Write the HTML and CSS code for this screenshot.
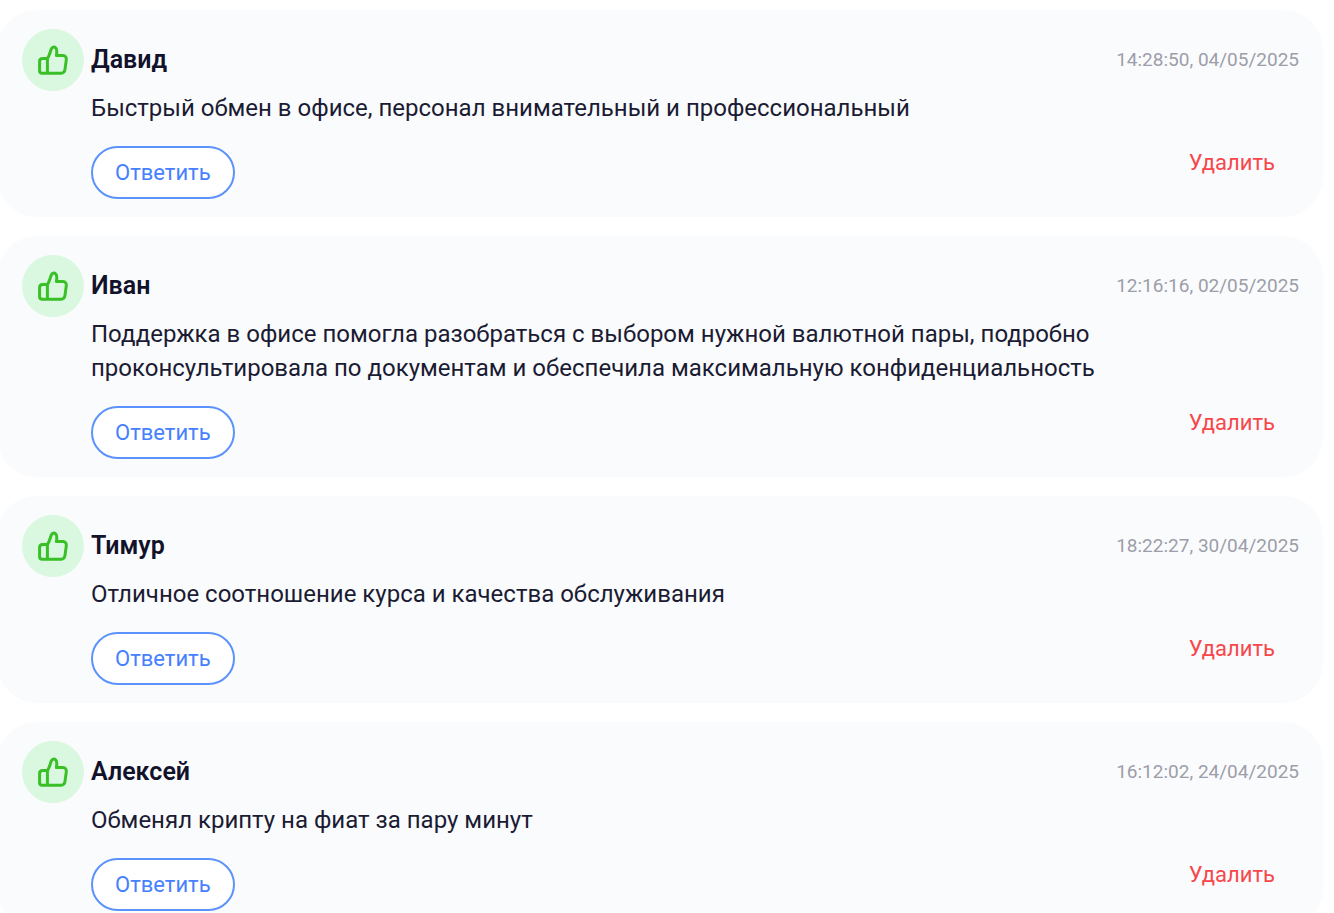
FILE: index.html
```html
<!DOCTYPE html>
<html lang="ru">

<head>
 <meta charset="UTF-8">
 <meta name="viewport" content="width=device-width, initial-scale=1.0">
 <title>Отзывы</title>
 <link rel="stylesheet" href="styles.css">
</head>

<body>
   <svg class="sprite" aria-hidden="true">
      <symbol id="like" viewBox="0 0 32 32">
         <path d="M10.4 14.4 C12 12.6 13.2 8.4 14.2 5.2 C14.9 3 17.2 2.4 18.8 4 C20.4 5.8 20 8 19.4 11.6 H26 C28.4 11.8 29.6 13.4 29.3 15.6 L28 25.4 C27.6 28 26.4 29.2 24.2 29.2 H5.4 C3.6 29.2 2.6 28.2 2.6 26.4 V17.4 C2.6 15.4 3.8 14.4 5.6 14.4 Z M10.4 14.4 V29.2"/>
      </symbol>
   </svg>

   <main class="reviews">
      <article class="review">
         <header class="review_head">
            <span class="review_icon"><svg><use href="#like"/></svg></span>
            <h2 class="review_name">Давид</h2>
            <time class="review_date">14:28:50, 04/05/2025</time>
         </header>
         <div class="review_body">
            <p class="review_text">Быстрый обмен в офисе, персонал внимательный и профессиональный</p>
            <div class="review_actions">
               <button type="button" class="btn_reply">Ответить</button>
               <button type="button" class="btn_delete">Удалить</button>
            </div>
         </div>
      </article>

      <article class="review">
         <header class="review_head">
            <span class="review_icon"><svg><use href="#like"/></svg></span>
            <h2 class="review_name">Иван</h2>
            <time class="review_date">12:16:16, 02/05/2025</time>
         </header>
         <div class="review_body">
            <p class="review_text">Поддержка в офисе помогла разобраться с выбором нужной валютной пары, подробно проконсультировала по документам и обеспечила максимальную конфиденциальность</p>
            <div class="review_actions">
               <button type="button" class="btn_reply">Ответить</button>
               <button type="button" class="btn_delete">Удалить</button>
            </div>
         </div>
      </article>

      <article class="review">
         <header class="review_head">
            <span class="review_icon"><svg><use href="#like"/></svg></span>
            <h2 class="review_name">Тимур</h2>
            <time class="review_date">18:22:27, 30/04/2025</time>
         </header>
         <div class="review_body">
            <p class="review_text">Отличное соотношение курса и качества обслуживания</p>
            <div class="review_actions">
               <button type="button" class="btn_reply">Ответить</button>
               <button type="button" class="btn_delete">Удалить</button>
            </div>
         </div>
      </article>

      <article class="review">
         <header class="review_head">
            <span class="review_icon"><svg><use href="#like"/></svg></span>
            <h2 class="review_name">Алексей</h2>
            <time class="review_date">16:12:02, 24/04/2025</time>
         </header>
         <div class="review_body">
            <p class="review_text">Обменял крипту на фиат за пару минут</p>
            <div class="review_actions">
               <button type="button" class="btn_reply">Ответить</button>
               <button type="button" class="btn_delete">Удалить</button>
            </div>
         </div>
      </article>
   </main>
</body>

</html>
```
FILE: styles.css
```css
* { box-sizing: border-box; }
body { margin: 0; background: #fff; color: #1b1b33; font-family: Roboto, sans-serif; font-size: 24px; line-height: 34px; overflow-x: hidden; scrollbar-width: none; }
h2, p { margin: 0; }
button { font-family: inherit; font-size: 22px; line-height: 34px; cursor: pointer; }
.sprite { display: none; }

.reviews { display: flex; flex-direction: column; gap: 19px; margin: 10px 11px 0 -3px; }
.review { background: #fafbfd; border-radius: 40px; padding: 19px 24px 18px 25px; }

.review_head { display: flex; align-items: center; gap: 7px; }
.review_icon { display: flex; justify-content: center; align-items: center; width: 62px; height: 62px; border-radius: 50%; background: #d9f8df; }
.review_icon svg { width: 32px; height: 32px; fill: none; stroke: #38c026; stroke-width: 3; stroke-linecap: round; stroke-linejoin: round; }
.review_name { font-size: 25px; font-weight: 600; color: #12122b; }
.review_date { margin-left: auto; font-size: 19px; color: #9c9ea8; }

.review_body { padding-left: 69px; }
.review_actions { display: flex; justify-content: space-between; align-items: flex-start; margin-top: 21px; }
.btn_reply { height: 53px; padding: 0 22px; background: #fff; color: #4680ff; border: 2px solid #5b92fb; border-radius: 27px; }
.btn_delete { padding: 0 24px; background: none; border: 0; color: #f7474b; }
```
